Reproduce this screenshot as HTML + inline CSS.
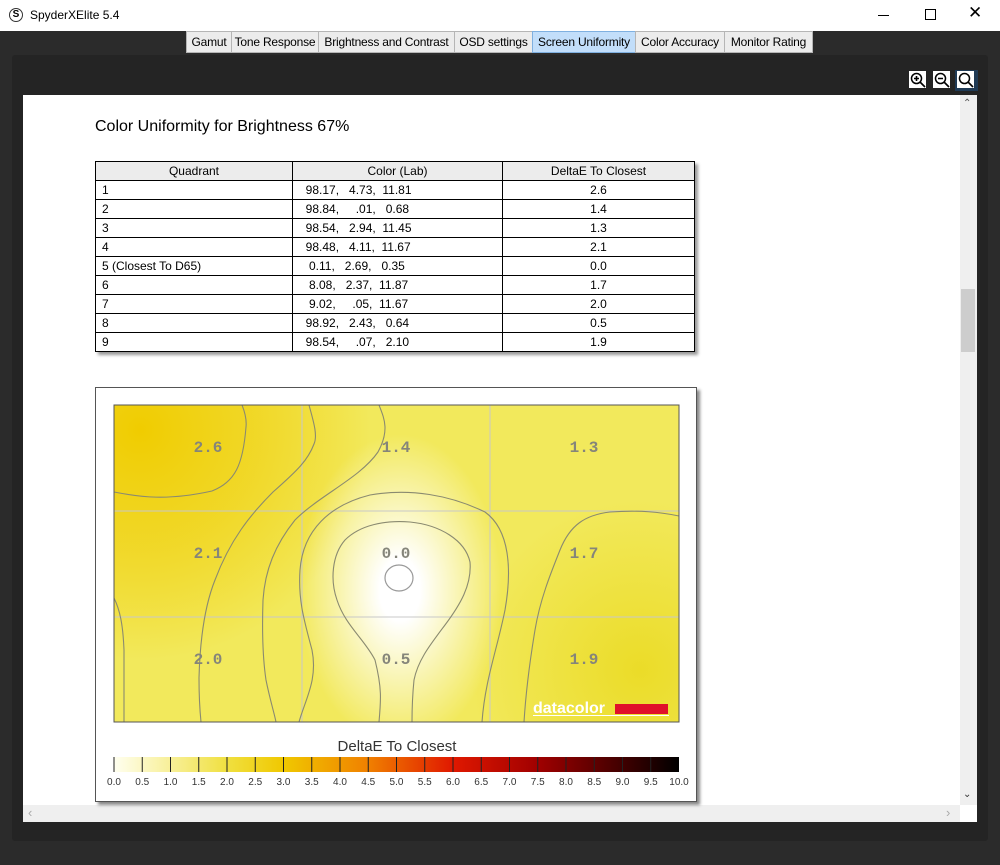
<!DOCTYPE html>
<html><head><meta charset="utf-8">
<style>
*{margin:0;padding:0;box-sizing:border-box}
body{width:1000px;height:865px;background:#2b2b2b;position:relative;overflow:hidden;font-family:"Liberation Sans",sans-serif}
.abs{position:absolute}
#title{left:0;top:0;width:1000px;height:31px;background:#fff;font-size:12px;color:#000}
.tab{position:absolute;top:31px;height:22px;background:#ececec;border:1px solid #b5b5b5;font-size:12px;line-height:20px;text-align:center;color:#000;letter-spacing:-0.2px}
table{border-collapse:collapse;font-size:12px}
td{border:1px solid #000;height:19px;padding:0 6px;line-height:17px}
</style></head><body>
<div id="title" class="abs">
  <div class="abs" style="left:9px;top:8px;width:14px;height:14px;border:1px solid #333;border-radius:50%;font-size:10px;line-height:12px;text-align:center;font-weight:bold">S</div>
  <div class="abs" style="left:30px;top:8px;">SpyderXElite 5.4</div>
  <div class="abs" style="left:878px;top:15px;width:11px;height:1px;background:#000"></div>
  <div class="abs" style="left:925px;top:9px;width:11px;height:11px;border:1px solid #000"></div>
  <div class="abs" style="left:968px;top:3px;font-size:17px;font-weight:300">✕</div>
</div>
<div class="abs" style="left:12px;top:55px;width:976px;height:786px;background:#242424;border-radius:3px"></div>
<div class="tab" style="left:186px;width:46px">Gamut</div>
<div class="tab" style="left:231px;width:88px">Tone Response</div>
<div class="tab" style="left:318px;width:137px">Brightness and Contrast</div>
<div class="tab" style="left:454px;width:79px">OSD settings</div>
<div class="tab" style="left:532px;width:104px;background:#c2defa;border-color:#7fb0e0">Screen Uniformity</div>
<div class="tab" style="left:635px;width:90px">Color Accuracy</div>
<div class="tab" style="left:724px;width:89px">Monitor Rating</div>
<svg class="abs" style="left:908px;top:70px" width="72" height="22">
 <rect x="1" y="1" width="17" height="17" fill="#fff"/><circle cx="8.5" cy="8.5" r="5" fill="none" stroke="#000" stroke-width="1.5"/><path d="M6 8.5h5M8.5 6v5M12 12l5 5" stroke="#000" stroke-width="1.6"/>
 <rect x="25" y="1" width="17" height="17" fill="#fff"/><circle cx="32.5" cy="8.5" r="5" fill="none" stroke="#000" stroke-width="1.5"/><path d="M30 8.5h5M36 12l5 5" stroke="#000" stroke-width="1.6"/>
 <rect x="47" y="-1" width="23" height="22" fill="#1f3a55"/>
 <rect x="49" y="1" width="17" height="17" fill="#fff"/><circle cx="56.5" cy="8.5" r="5" fill="none" stroke="#000" stroke-width="1.5"/><path d="M60 12l5 5" stroke="#000" stroke-width="1.6"/>
</svg>
<div class="abs" style="left:23px;top:95px;width:954px;height:727px;background:#fff"></div>
<div class="abs" style="left:960px;top:95px;width:17px;height:710px;background:#efefef"></div>
<div class="abs" style="left:961px;top:289px;width:14px;height:63px;background:#cdcdcd"></div>
<div class="abs" style="left:963px;top:98px;font-size:10px;color:#555">⌃</div>
<div class="abs" style="left:963px;top:789px;font-size:10px;color:#333">⌄</div>
<div class="abs" style="left:23px;top:805px;width:937px;height:17px;background:#efefef"></div>
<div class="abs" style="left:28px;top:805px;font-size:13px;color:#aaa">‹</div>
<div class="abs" style="left:946px;top:805px;font-size:13px;color:#aaa">›</div>

<div class="abs" style="left:95px;top:118px;font-size:16px;color:#000">Color Uniformity for Brightness 67%</div>
<div class="abs" style="left:95px;top:161px;box-shadow:3px 3px 3px #999">
<table style="width:600px">
<tr style="background:#ececec;text-align:center"><td style="width:197px">Quadrant</td><td style="width:210px">Color (Lab)</td><td>DeltaE To Closest</td></tr>
<tr><td>1</td><td>&nbsp;&nbsp;98.17,&nbsp;&nbsp; 4.73,&nbsp; 11.81</td><td style="text-align:center">2.6</td></tr>
<tr><td>2</td><td>&nbsp;&nbsp;98.84,&nbsp;&nbsp;&nbsp;&nbsp; .01,&nbsp;&nbsp; 0.68</td><td style="text-align:center">1.4</td></tr>
<tr><td>3</td><td>&nbsp;&nbsp;98.54,&nbsp;&nbsp; 2.94,&nbsp; 11.45</td><td style="text-align:center">1.3</td></tr>
<tr><td>4</td><td>&nbsp;&nbsp;98.48,&nbsp;&nbsp; 4.11,&nbsp; 11.67</td><td style="text-align:center">2.1</td></tr>
<tr><td>5 (Closest To D65)</td><td>&nbsp;&nbsp;&nbsp;0.11,&nbsp;&nbsp; 2.69,&nbsp;&nbsp; 0.35</td><td style="text-align:center">0.0</td></tr>
<tr><td>6</td><td>&nbsp;&nbsp;&nbsp;8.08,&nbsp;&nbsp; 2.37,&nbsp; 11.87</td><td style="text-align:center">1.7</td></tr>
<tr><td>7</td><td>&nbsp;&nbsp;&nbsp;9.02,&nbsp;&nbsp;&nbsp;&nbsp; .05,&nbsp; 11.67</td><td style="text-align:center">2.0</td></tr>
<tr><td>8</td><td>&nbsp;&nbsp;98.92,&nbsp;&nbsp; 2.43,&nbsp;&nbsp; 0.64</td><td style="text-align:center">0.5</td></tr>
<tr><td>9</td><td>&nbsp;&nbsp;98.54,&nbsp;&nbsp;&nbsp;&nbsp; .07,&nbsp;&nbsp; 2.10</td><td style="text-align:center">1.9</td></tr>
</table></div>

<div class="abs" style="left:95px;top:387px;width:602px;height:415px;border:1px solid #555;background:#fff;box-shadow:3px 3px 3px #888"></div>
<svg class="abs" style="left:0;top:0" width="1000" height="865">
<defs>
 <radialGradient id="tl" cx="140" cy="430" r="230" gradientUnits="userSpaceOnUse"><stop offset="0" stop-color="#f0cc00"/><stop offset="0.5" stop-color="#f0d010" stop-opacity="0.7"/><stop offset="1" stop-color="#f0cc00" stop-opacity="0"/></radialGradient>
 <radialGradient id="br" cx="640" cy="670" r="170" gradientUnits="userSpaceOnUse"><stop offset="0" stop-color="#ebdc28"/><stop offset="1" stop-color="#ebdc28" stop-opacity="0"/></radialGradient>
 <radialGradient id="c" cx="400" cy="590" r="120" gradientUnits="userSpaceOnUse" gradientTransform="translate(400 590) scale(0.85 1.3) translate(-400 -590)"><stop offset="0" stop-color="#fff"/><stop offset="0.2" stop-color="#fff"/><stop offset="1" stop-color="#fff" stop-opacity="0"/></radialGradient>
 <linearGradient id="cb" x1="0" x2="1"><stop offset="0" stop-color="#fffff0"/><stop offset="0.2" stop-color="#f0e040"/><stop offset="0.3" stop-color="#f0c800"/><stop offset="0.45" stop-color="#f08000"/><stop offset="0.6" stop-color="#e01800"/><stop offset="0.75" stop-color="#a00000"/><stop offset="1" stop-color="#000"/></linearGradient>
</defs>
<rect x="114" y="405" width="565" height="317" fill="#f2e95c"/>
<rect x="114" y="405" width="565" height="317" fill="url(#tl)"/>
<rect x="114" y="405" width="565" height="317" fill="url(#br)"/>
<rect x="114" y="405" width="565" height="317" fill="url(#c)"/>
<g stroke="#c8c8c8" stroke-width="1"><path d="M302 405V722M490 405V722M114 511H679M114 617H679"/></g>
<g fill="none" stroke="#8a8a70" stroke-width="1.1">
<path d="M114 492C140 497 167 501 212 491C235 482 243 465 246 427C247 418 244 410 242 405"/>
<path d="M309 405C313 420 318 435 314 444C308 460 298 470 273 492C250 515 230 540 215 580C205 605 200 640 199 678C199 700 200 712 201 722"/>
<path d="M379 405C384 418 390 430 378 452C360 478 320 495 295 520C275 545 265 570 263 600C262 630 263 660 266 680C270 700 274 712 276 722"/>
<path d="M299 722C305 700 318 680 312 650C304 620 298 600 300 570C303 530 330 505 370 495C410 488 450 495 485 512C510 530 512 570 505 610C497 650 485 680 482 722"/>
<path d="M379 722C381 700 382 688 375 660C365 640 345 625 337 600C330 580 332 555 345 540C360 525 385 520 410 522C440 525 465 540 470 562C472 585 460 605 445 625C430 645 418 660 414 680C412 700 412 712 412 722"/>
<path d="M679 516C660 512 640 510 610 512C585 515 570 525 560 550C550 575 540 600 535 630C530 660 526 690 524 722"/>
<path d="M114 598C120 610 123 625 124 650C124 680 124 700 124 722"/>
</g>
<ellipse cx="399" cy="578" rx="14" ry="13" fill="#fff" stroke="#999" stroke-width="1.2"/>
<rect x="114" y="405" width="565" height="317" fill="none" stroke="#555"/>
<g font-family="Liberation Mono,monospace" font-size="16" font-weight="bold" fill="#85857a" text-anchor="middle">
<text x="208" y="452">2.6</text><text x="396" y="452">1.4</text><text x="584" y="452">1.3</text>
<text x="208" y="558">2.1</text><text x="396" y="558">0.0</text><text x="584" y="558">1.7</text>
<text x="208" y="664">2.0</text><text x="396" y="664">0.5</text><text x="584" y="664">1.9</text>
</g>
<text x="533" y="713" font-family="Liberation Sans,sans-serif" font-size="16" font-weight="bold" fill="#fff">datacolor</text>
<rect x="615" y="704" width="53" height="10" fill="#e0102a"/>
<rect x="533" y="715" width="136" height="1" fill="#fff"/>
<text x="397" y="751" font-family="Liberation Sans,sans-serif" font-size="15" fill="#333" text-anchor="middle">DeltaE To Closest</text>
<rect x="114" y="757" width="565" height="15" fill="url(#cb)"/>
<g stroke="#222" stroke-width="1" id="ticks"></g>
<g font-family="Liberation Sans,sans-serif" font-size="10" fill="#333" text-anchor="middle" id="labels"></g>
</svg>
<script>
var t=document.getElementById('ticks'),l=document.getElementById('labels'),ns='http://www.w3.org/2000/svg';
for(var i=0;i<=20;i++){var x=114+i*565/20;
 if(i<20){var p=document.createElementNS(ns,'line');p.setAttribute('x1',x);p.setAttribute('x2',x);p.setAttribute('y1',757);p.setAttribute('y2',772);t.appendChild(p);}
 var s=document.createElementNS(ns,'text');s.setAttribute('x',x);s.setAttribute('y',785);s.textContent=(i/2).toFixed(1);l.appendChild(s);}
</script>
</body></html>
